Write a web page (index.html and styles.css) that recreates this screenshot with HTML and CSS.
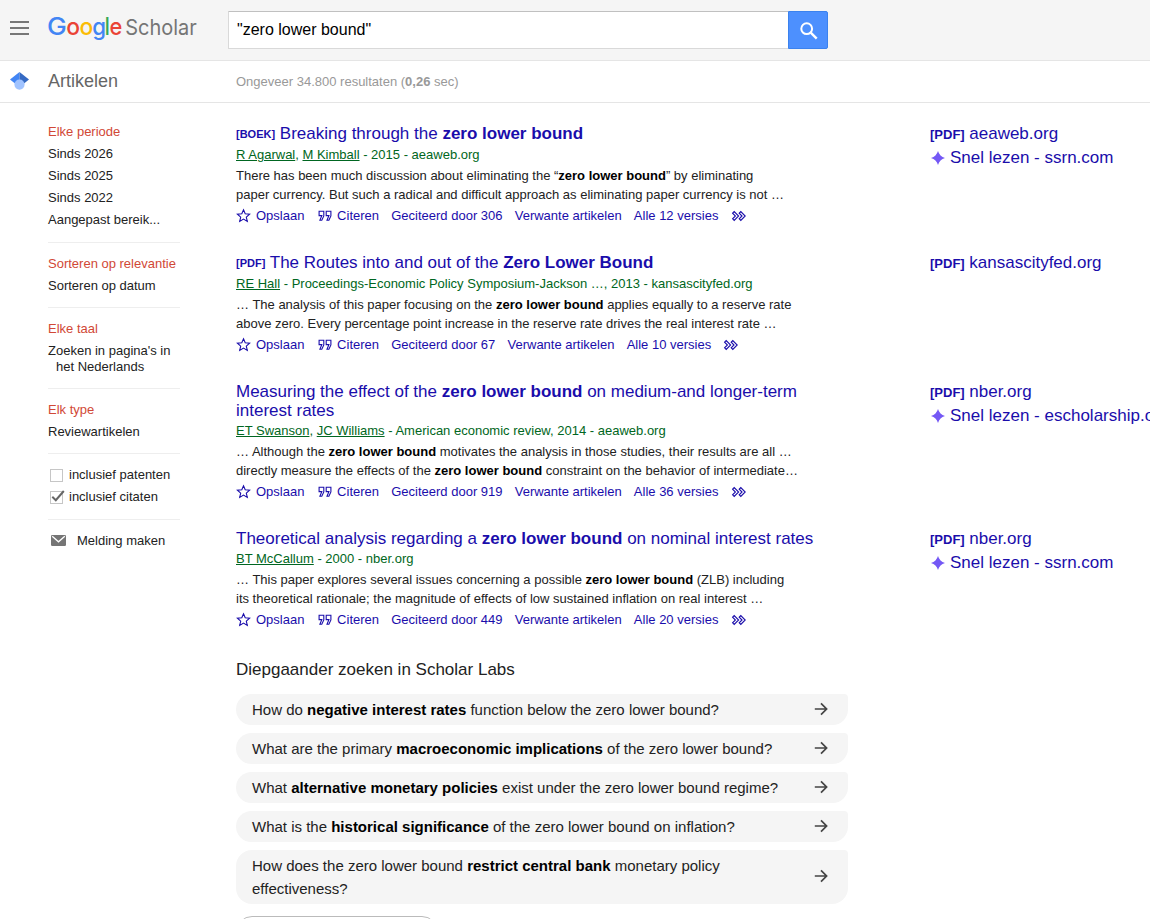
FILE: index.html
```html
<!DOCTYPE html>
<html lang="nl">
<head>
    <meta charset="UTF-8">
    <meta name="viewport" content="width=device-width, initial-scale=1.0">
    <title>"zero lower bound" - Google Scholar</title>
    <link rel="stylesheet" href="styles.css">
</head>
<body>
    <!-- Icons that are used more than once -->
    <svg class="sprite">
        <symbol id="star" viewBox="0 0 15 16"><path d="M7.5 1.8l1.7 4 4.4.4-3.3 2.9 1 4.3-3.8-2.3-3.8 2.3 1-4.3L1.4 6.2l4.4-.4z" fill="none" stroke="currentColor" stroke-width="1.1"/></symbol>
        <symbol id="quote" viewBox="0 0 14 12"><path d="M5.8 1.3H1.1v4.3h2.7L1.9 10.2h1.9l2-4.3zM12.9 1.3H8.2v4.3h2.7L9 10.2h1.9l2-4.3z" fill="none" stroke="currentColor" stroke-width="1.1"/></symbol>
        <symbol id="more" viewBox="0 0 16 12"><path d="M1.6 3.2l1.6-1.6L7.6 6l-4.4 4.4-1.6-1.6L4.4 6zM8.2 3.2l1.6-1.6L14.2 6l-4.4 4.4-1.6-1.6L11 6z" fill="none" stroke="currentColor" stroke-width="1.1"/></symbol>
        <symbol id="spark" viewBox="0 0 14 14"><path d="M7 0Q8.6 5.4 14 7 8.6 8.6 7 14 5.4 8.6 0 7 5.4 5.4 7 0z" fill="#7458f5"/></symbol>
        <symbol id="arrow" viewBox="0 0 14 14"><path d="M.8 7h11.6M7 1.4L12.6 7 7 12.6" fill="none" stroke="#444" stroke-width="1.7"/></symbol>
    </svg>

    <header class="top">
        <svg class="menu" viewBox="0 0 20 14"><path d="M0 1h19M0 7h19M0 13h19" stroke="#777" stroke-width="2"/></svg>
        <svg class="logo" viewBox="0 0 152 32">
            <g class="google">
                <text x="-1" y="23" fill="#4285f4" textLength="19.8" lengthAdjust="spacingAndGlyphs">G</text>
                <text x="18.2" y="23" fill="#ea4335" textLength="13.8" lengthAdjust="spacingAndGlyphs">o</text>
                <text x="31.4" y="23" fill="#fbbc05" textLength="13.8" lengthAdjust="spacingAndGlyphs">o</text>
                <text x="44.2" y="23" fill="#4285f4" textLength="13.8" lengthAdjust="spacingAndGlyphs">g</text>
                <text x="56.8" y="23" fill="#34a853" textLength="5" lengthAdjust="spacingAndGlyphs">l</text>
                <text x="61.4" y="23" fill="#ea4335" textLength="12.8" lengthAdjust="spacingAndGlyphs">e</text>
            </g>
            <text class="scholar" x="77.2" y="23" textLength="71.6" lengthAdjust="spacingAndGlyphs">Scholar</text>
        </svg>
        <form class="search" onsubmit="return false">
            <input type="text" value="&quot;zero lower bound&quot;">
            <button type="submit" aria-label="Zoeken">
                <svg width="18" height="18" viewBox="0 0 18 18"><circle cx="6.7" cy="6.7" r="5.4" fill="none" stroke="#fff" stroke-width="2"/><path d="M10.7 10.7l6 6" stroke="#fff" stroke-width="2.4"/></svg>
            </button>
        </form>
    </header>

    <div class="subbar">
        <svg class="cap" viewBox="0 0 20 18"><path d="M9.5 0L0 7.6l5 4h4.5z" fill="#4285f4"/><path d="M9.5 0L19 7.6l-5 4H9.5z" fill="#356ac3"/><circle cx="9.5" cy="12.6" r="5.1" fill="#a0c3ff"/></svg>
        <span class="section">Artikelen</span>
        <span class="count">Ongeveer 34.800 resultaten (<b>0,26</b> sec)</span>
    </div>

    <div class="page">
        <nav class="side">
            <ul class="first">
                <li class="sel">Elke periode</li>
                <li>Sinds 2026</li>
                <li>Sinds 2025</li>
                <li>Sinds 2022</li>
                <li>Aangepast bereik...</li>
            </ul>
            <ul>
                <li class="sel">Sorteren op relevantie</li>
                <li>Sorteren op datum</li>
            </ul>
            <ul>
                <li class="sel">Elke taal</li>
                <li class="hang">Zoeken in pagina's in het Nederlands</li>
            </ul>
            <ul>
                <li class="sel">Elk type</li>
                <li>Reviewartikelen</li>
            </ul>
            <ul class="checks">
                <li><svg class="box" viewBox="0 0 15 15"><rect x=".5" y="2.5" width="12" height="12" fill="#fff" stroke="#c6c6c6"/></svg>inclusief patenten</li>
                <li><svg class="box" viewBox="0 0 15 15"><rect x=".5" y="2.5" width="12" height="12" fill="#fff" stroke="#c6c6c6"/><path d="M2.3 7.8l3.5 3.4 8-9.2" fill="none" stroke="#666" stroke-width="2"/></svg>inclusief citaten</li>
            </ul>
            <ul>
                <li><svg class="mail" viewBox="0 0 15 11"><rect width="15" height="11" rx="1.2" fill="#757575"/><path d="M1.2 1.2l6.3 5.6 6.3-5.6" fill="none" stroke="#fff" stroke-width="1.3"/></svg>Melding maken</li>
            </ul>
        </nav>

        <main class="results">
            <article class="result">
                <div class="body">
                    <h3><span class="tag">[BOEK]</span> Breaking through the <b>zero lower bound</b></h3>
                    <div class="authors"><u>R Agarwal</u>, <u>M Kimball</u> - 2015 - aeaweb.org</div>
                    <div class="snippet">There has been much discussion about eliminating the “<b>zero lower bound</b>” by eliminating<br>paper currency. But such a radical and difficult approach as eliminating paper currency is not …</div>
                    <div class="links">
                        <a><svg class="star"><use href="#star"/></svg>Opslaan</a>
                        <a><svg class="quote"><use href="#quote"/></svg>Citeren</a>
                        <a>Geciteerd door 306</a><a>Verwante artikelen</a><a>Alle 12 versies</a>
                        <a><svg class="more"><use href="#more"/></svg></a>
                    </div>
                </div>
                <div class="access">
                    <div><span class="pdf">[PDF]</span> aeaweb.org</div>
                    <div><svg class="spark"><use href="#spark"/></svg>Snel lezen - ssrn.com</div>
                </div>
            </article>

            <article class="result">
                <div class="body">
                    <h3><span class="tag">[PDF]</span> The Routes into and out of the <b>Zero Lower Bound</b></h3>
                    <div class="authors"><u>RE Hall</u> - Proceedings-Economic Policy Symposium-Jackson …, 2013 - kansascityfed.org</div>
                    <div class="snippet">… The analysis of this paper focusing on the <b>zero lower bound</b> applies equally to a reserve rate<br>above zero. Every percentage point increase in the reserve rate drives the real interest rate …</div>
                    <div class="links">
                        <a><svg class="star"><use href="#star"/></svg>Opslaan</a>
                        <a><svg class="quote"><use href="#quote"/></svg>Citeren</a>
                        <a>Geciteerd door 67</a><a>Verwante artikelen</a><a>Alle 10 versies</a>
                        <a><svg class="more"><use href="#more"/></svg></a>
                    </div>
                </div>
                <div class="access">
                    <div><span class="pdf">[PDF]</span> kansascityfed.org</div>
                </div>
            </article>

            <article class="result">
                <div class="body">
                    <h3>Measuring the effect of the <b>zero lower bound</b> on medium-and longer-term<br>interest rates</h3>
                    <div class="authors"><u>ET Swanson</u>, <u>JC Williams</u> - American economic review, 2014 - aeaweb.org</div>
                    <div class="snippet">… Although the <b>zero lower bound</b> motivates the analysis in those studies, their results are all …<br>directly measure the effects of the <b>zero lower bound</b> constraint on the behavior of intermediate…</div>
                    <div class="links">
                        <a><svg class="star"><use href="#star"/></svg>Opslaan</a>
                        <a><svg class="quote"><use href="#quote"/></svg>Citeren</a>
                        <a>Geciteerd door 919</a><a>Verwante artikelen</a><a>Alle 36 versies</a>
                        <a><svg class="more"><use href="#more"/></svg></a>
                    </div>
                </div>
                <div class="access">
                    <div><span class="pdf">[PDF]</span> nber.org</div>
                    <div><svg class="spark"><use href="#spark"/></svg>Snel lezen - escholarship.org</div>
                </div>
            </article>

            <article class="result">
                <div class="body">
                    <h3>Theoretical analysis regarding a <b>zero lower bound</b> on nominal interest rates</h3>
                    <div class="authors"><u>BT McCallum</u> - 2000 - nber.org</div>
                    <div class="snippet">… This paper explores several issues concerning a possible <b>zero lower bound</b> (ZLB) including<br>its theoretical rationale; the magnitude of effects of low sustained inflation on real interest …</div>
                    <div class="links">
                        <a><svg class="star"><use href="#star"/></svg>Opslaan</a>
                        <a><svg class="quote"><use href="#quote"/></svg>Citeren</a>
                        <a>Geciteerd door 449</a><a>Verwante artikelen</a><a>Alle 20 versies</a>
                        <a><svg class="more"><use href="#more"/></svg></a>
                    </div>
                </div>
                <div class="access">
                    <div><span class="pdf">[PDF]</span> nber.org</div>
                    <div><svg class="spark"><use href="#spark"/></svg>Snel lezen - ssrn.com</div>
                </div>
            </article>

            <section class="labs">
                <h2>Diepgaander zoeken in Scholar Labs</h2>
                <a class="pill"><span>How do <b>negative interest rates</b> function below the zero lower bound?</span><svg class="arrow"><use href="#arrow"/></svg></a>
                <a class="pill"><span>What are the primary <b>macroeconomic implications</b> of the zero lower bound?</span><svg class="arrow"><use href="#arrow"/></svg></a>
                <a class="pill"><span>What <b>alternative monetary policies</b> exist under the zero lower bound regime?</span><svg class="arrow"><use href="#arrow"/></svg></a>
                <a class="pill"><span>What is the <b>historical significance</b> of the zero lower bound on inflation?</span><svg class="arrow"><use href="#arrow"/></svg></a>
                <a class="pill"><span>How does the zero lower bound <b>restrict central bank</b> monetary policy<br>effectiveness?</span><svg class="arrow"><use href="#arrow"/></svg></a>
                <div class="ask"></div>
            </section>
        </main>
    </div>
</body>
</html>
```
FILE: styles.css
```css
* {
    box-sizing: border-box;
}

html, body {
    height: 919px;
    overflow: hidden;
}

body {
    margin: 0;
    background: #fff;
    color: #222;
    font-family: Arial, "Liberation Sans", sans-serif;
    font-size: 13px;
}

svg {
    display: block;
    flex: none;
}

.sprite {
    display: none;
}

/* Header */
.top {
    display: flex;
    height: 61px;
    padding-left: 10px;
    background: #f5f5f5;
    border-bottom: 1px solid #e5e5e5;
}

.menu {
    width: 20px;
    height: 14px;
    margin: 21px 18px 0 0;
}

.logo {
    width: 152px;
    height: 32px;
    margin: 12px 28px 0 0;
    overflow: visible;
}

.google {
    font-family: Inter, sans-serif;
    font-size: 24px;
    font-weight: 500;
}

.scholar {
    font-family: Inter, sans-serif;
    font-size: 21.5px;
    fill: #757575;
}

.search {
    display: flex;
    width: 600px;
    height: 38px;
    margin-top: 11px;
}

.search input {
    width: 560px;
    padding: 0 8px;
    border: 1px solid #d9d9d9;
    border-top-color: #c0c0c0;
    border-right: 0;
    border-radius: 1px 0 0 1px;
    font: 16px Arial, "Liberation Sans", sans-serif;
    color: #000;
    outline: none;
}

.search button {
    display: flex;
    align-items: center;
    justify-content: center;
    width: 40px;
    padding: 1px 0 0 1px;
    background: #4d90fe;
    border: 1px solid #3b82ee;
    border-radius: 0 2px 2px 0;
}

.subbar {
    display: flex;
    align-items: center;
    height: 42px;
    padding-left: 10px;
    border-bottom: 1px solid #e5e5e5;
}

.cap {
    width: 20px;
    height: 18px;
    margin: 0 18px 2px 0;
}

.section {
    width: 188px;
    font-size: 18px;
    color: #666;
}

.count {
    color: #999;
}

.page {
    display: flex;
}

/* Filters on the left */
.side {
    width: 132px;
    margin: 8px 56px 0 48px;
}

.side ul {
    margin: 0;
    padding: 10px 0;
    list-style: none;
}

.side ul + ul {
    border-top: 1px solid #eee;
}

.side .first, .side .checks {
    padding-bottom: 11px;
}

.side li {
    display: flex;
    padding: 3px 0;
    line-height: 16px;
    white-space: nowrap;
}

.side .sel {
    color: #d14836;
}

.side .hang {
    display: block;
    padding-left: 8px;
    text-indent: -8px;
    white-space: normal;
}

.box {
    width: 15px;
    height: 15px;
    margin: 0 4px 0 2px;
}

.mail {
    width: 15px;
    height: 11px;
    margin: 2px 11px 0 3px;
}

/* Results */
.results {
    flex: 1;
    padding-top: 21px;
    min-width: 0;
}

.result {
    display: flex;
    margin-bottom: 28px;
    color: #1a0dab;
}

.body {
    flex: none;
    width: 694px;
}

h3 {
    margin: 0 0 2px;
    font-size: 17px;
    font-weight: normal;
    line-height: 19px;
}

.tag {
    font-size: 11px;
    font-weight: bold;
    vertical-align: 1px;
}

.authors {
    line-height: 18px;
    color: #006621;
}

.snippet {
    margin: 2px 0;
    line-height: 19px;
    color: #222;
}

.snippet b {
    color: #000;
}

.links {
    display: flex;
    gap: 12.2px;
    line-height: 19px;
}

.links a {
    display: flex;
    align-items: center;
}

.star {
    width: 15px;
    height: 16px;
    margin-right: 5px;
}

.quote {
    width: 14px;
    height: 12px;
    margin: 0 5.5px 0 1px;
}

.more {
    width: 16px;
    height: 12px;
}

.access {
    font-size: 17px;
    line-height: 24px;
    white-space: nowrap;
    margin-top: -2px;
}

.access div {
    display: flex;
    align-items: center;
}

.pdf {
    margin-right: 4.6px;
    padding-top: 1px;
    font-size: 13px;
    font-weight: bold;
    line-height: 23px;
}

.spark {
    width: 14px;
    height: 14px;
    margin: 0 5.5px 0 .5px;
}

/* Suggested questions */
.labs {
    width: 612px;
}

.labs h2 {
    margin: 31px 0 14px;
    font-size: 17px;
    font-weight: normal;
    line-height: 20px;
}

.pill {
    display: flex;
    align-items: center;
    justify-content: space-between;
    margin-bottom: 8px;
    padding: 4px 20px 4px 16px;
    background: #f5f5f5;
    border-radius: 16px 4px 16px 16px;
    font-size: 15px;
    line-height: 23px;
}

.pill b {
    color: #000;
}

.arrow {
    width: 14px;
    height: 14px;
    margin-bottom: 2px;
}

.ask {
    width: 202px;
    height: 40px;
    margin-top: 12px;
    border: 1px solid #bbb;
    border-radius: 16px;
}
```
